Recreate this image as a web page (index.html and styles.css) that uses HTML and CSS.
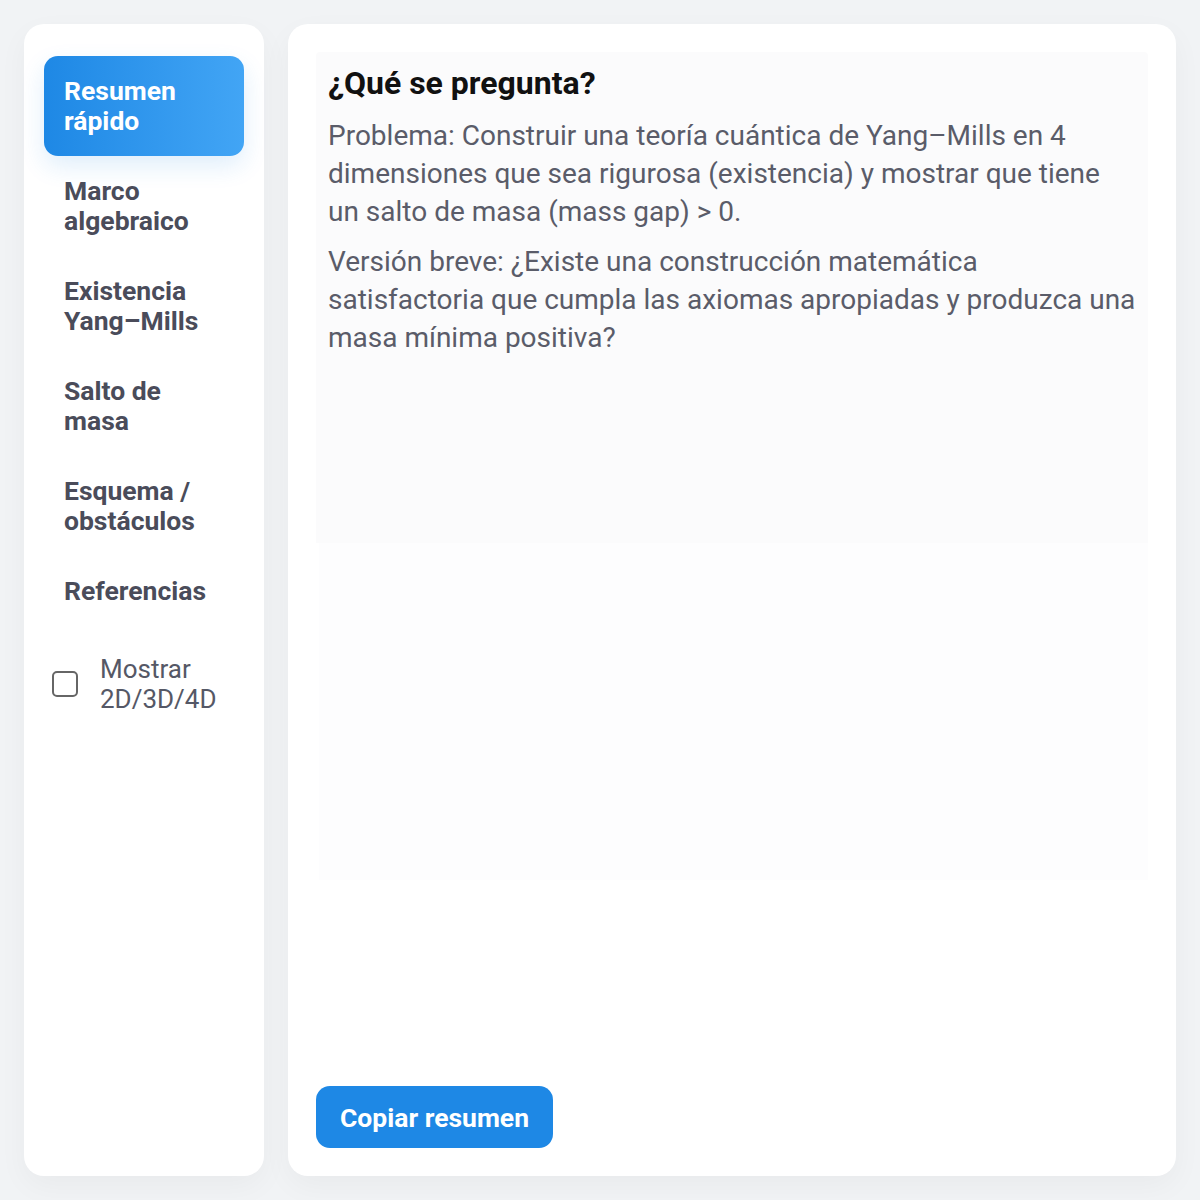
FILE: index.html
```html
<!DOCTYPE html>
<html lang="es">
<head>
<meta charset="UTF-8" />
<meta name="viewport" content="width=device-width, initial-scale=1" />
<title>Yang–Mills: resumen</title>
<link rel="stylesheet" href="styles.css">
</head>
<body>
  <div class="layout">
    <nav class="sidebar" aria-label="Secciones">
      <a class="nav-item active" href="#">Resumen rápido</a>
      <a class="nav-item" href="#">Marco algebraico</a>
      <a class="nav-item" href="#">Existencia Yang–Mills</a>
      <a class="nav-item" href="#">Salto de masa</a>
      <a class="nav-item" href="#">Esquema / obstáculos</a>
      <a class="nav-item" href="#">Referencias</a>
      <label class="toggle">
        <input type="checkbox" id="dims">
        <span>Mostrar 2D/3D/4D</span>
      </label>
    </nav>

    <main class="content">
      <section class="panel">
        <h2>¿Qué se pregunta?</h2>
        <p>Problema: Construir una teoría cuántica de Yang–Mills en 4 dimensiones que sea rigurosa (existencia) y mostrar que tiene un salto de masa (mass gap) &gt; 0.</p>
        <p>Versión breve: ¿Existe una construcción matemática satisfactoria que cumpla las axiomas apropiadas y produzca una masa mínima positiva?</p>
      </section>
      <div class="panel-tail"></div>
      <button type="button" class="copy-btn">Copiar resumen</button>
    </main>
  </div>
</body>
</html>
```

FILE: styles.css
```css
* {
  box-sizing: border-box;
}
body {
  margin: 0;
  background: #f1f3f5;
  font-family: Roboto, 'Noto Sans', Arial, sans-serif;
}
.layout {
  display: flex;
  gap: 24px;
  padding: 24px;
  height: 1200px;
}
.sidebar {
  width: 240px;
  flex-shrink: 0;
  background: #fff;
  border-radius: 20px;
  padding: 32px 20px;
  display: flex;
  flex-direction: column;
  box-shadow: 0 10px 30px rgb(0 0 0 / 0.04);
}
.nav-item {
  display: block;
  padding: 20px;
  font-size: 26.5px;
  line-height: 30px;
  font-weight: 700;
  color: #4a4c5a;
  text-decoration: none;
  border-radius: 14px;
}
.nav-item.active {
  color: #fff;
  background: linear-gradient(90deg, #1e88e5, #42a5f5);
  box-shadow: 0 10px 24px rgb(30 136 229 / 0.14);
}
.toggle {
  display: flex;
  align-items: center;
  gap: 22px;
  margin-top: 28px;
  padding-left: 8px;
  font-size: 26px;
  line-height: 30px;
  color: #555866;
}
.toggle input {
  appearance: none;
  width: 26px;
  height: 26px;
  margin: 0;
  flex-shrink: 0;
  border: 2px solid #666;
  border-radius: 5px;
  background: #fff;
}
.content {
  flex: 1;
  background: #fff;
  border-radius: 20px;
  padding: 28px;
  display: flex;
  flex-direction: column;
  box-shadow: 0 10px 30px rgb(0 0 0 / 0.04);
}
.panel {
  height: 491px;
  background: #fbfbfc;
  border-radius: 4px 4px 0 0;
  padding: 12px 11px 12px 12px;
}
.panel-tail {
  height: 337px;
  margin-left: 3px;
  background: #fdfdfe;
}
.panel h2 {
  margin: 0 0 15px;
  font-size: 32px;
  line-height: 38px;
  font-weight: 700;
  color: #111;
}
.panel p {
  margin: 0 0 12px;
  font-size: 28px;
  line-height: 38px;
  color: #5a5c69;
}
.copy-btn {
  margin-top: auto;
  align-self: flex-start;
  height: 62px;
  padding: 0 24px;
  border: none;
  border-radius: 14px;
  background: #1e88e5;
  color: #fff;
  font-family: inherit;
  font-size: 26.5px;
  font-weight: 700;
  cursor: pointer;
}
```
